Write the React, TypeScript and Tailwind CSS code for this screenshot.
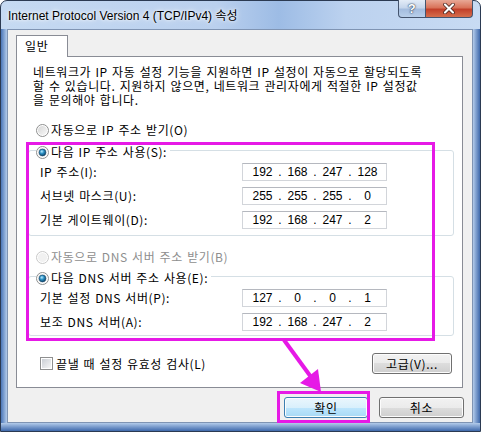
import React from 'react';

const kr = "font-['Noto_Sans_CJK_KR','Noto_Sans',sans-serif]";

function Radio({ checked, disabled }: { checked?: boolean; disabled?: boolean }) {
  return (
    <svg width="13" height="13" viewBox="0 0 13 13" className="shrink-0">
      <defs>
        <linearGradient id="rbg" x1="0" y1="0" x2="1" y2="1">
          <stop offset="0" stopColor="#d6d6d6" />
          <stop offset="1" stopColor="#f8f8f8" />
        </linearGradient>
        <radialGradient id="rdot" cx="0.4" cy="0.35" r="0.7">
          <stop offset="0" stopColor="#b9ecff" />
          <stop offset="0.45" stopColor="#2a8fc4" />
          <stop offset="1" stopColor="#0b3a5c" />
        </radialGradient>
      </defs>
      <circle cx="6.5" cy="6.5" r="6" fill="#fff" stroke={disabled ? '#c8c8c8' : '#8e8f8f'} />
      <circle cx="6.5" cy="6.5" r="4.6" fill={disabled ? '#f1f1f1' : 'url(#rbg)'} />
      {checked && <circle cx="6.5" cy="6.5" r="3.4" fill="url(#rdot)" stroke="#164a6e" strokeWidth="0.6" />}
    </svg>
  );
}

function Checkbox() {
  return (
    <div className="w-[13px] h-[13px] shrink-0 border border-[#8e8f8f] bg-white p-[1px]">
      <div className="w-full h-full bg-gradient-to-br from-[#cbcfd5] to-[#f6f6f6]" />
    </div>
  );
}

function IpField({ parts }: { parts: string[] }) {
  return (
    <div className="w-[145px] h-[18px] flex items-center pl-[5px] bg-white border border-[#d2d5da] border-t-[#b5b8bf] font-['Liberation_Sans',sans-serif] text-[12px] text-black leading-none tracking-normal">
      {parts.map((p, i) => (
        <React.Fragment key={i}>
          {i > 0 && <span className="w-[6px] text-center">.</span>}
          <span className="w-[29px] text-center">{p}</span>
        </React.Fragment>
      ))}
    </div>
  );
}

function FieldRow({ label, parts }: { label: string; parts: string[] }) {
  return (
    <div className="h-[24px] flex items-center pl-[11px]">
      <span className="w-[202px]">{label}</span>
      <IpField parts={parts} />
    </div>
  );
}

function RadioRow({ label, checked, disabled, className = '' }: { label: string; checked?: boolean; disabled?: boolean; className?: string }) {
  return (
    <div className={`h-[16px] flex items-center gap-[2px] ${className}`}>
      <Radio checked={checked} disabled={disabled} />
      <span className={disabled ? 'text-[#8e8e8e]' : 'text-black'}>{label}</span>
    </div>
  );
}

const btn =
  'h-[21px] rounded-[3px] border flex items-center justify-center text-[12px] text-black shadow-[inset_0_0_0_1px_#fcfcfc]';
const btnGray =
  'border-[#707070] bg-[linear-gradient(to_bottom,#f2f2f2_0%,#ebebeb_50%,#dddddd_50%,#cfcfcf_100%)]';
const btnBlue =
  'border-[#3c7fb1] bg-[linear-gradient(to_bottom,#eaf6fd_0%,#d9f0fc_50%,#bee6fd_50%,#a7d9f5_100%)] shadow-[inset_0_0_0_1px_#c4e8fc]';

export default function App() {
  return (
    <div className={`w-[481px] h-[432px] relative overflow-hidden bg-white text-[12px] tracking-[0.6px] [word-spacing:1px] ${kr}`}>
      <div className="w-full h-full flex flex-col rounded-t-[7px] border border-[#2b3a52] bg-[linear-gradient(90deg,#c6daf2_0%,#bad0ee_45%,#9dbce5_58%,#bcd2ef_72%,#c8dbf3_100%)]">
        {/* title bar */}
        <div className="h-[28px] flex justify-between shrink-0">
          <div className="h-full flex items-center pl-[7px] pt-[1px] font-['Liberation_Sans','Noto_Sans_CJK_KR',sans-serif] text-[12px] tracking-normal [word-spacing:0] text-black [text-shadow:0_0_6px_#fff,0_0_3px_#fff]">
            Internet Protocol Version 4 (TCP/IPv4) 속성
          </div>
          <div className="self-start flex -mt-[1px] pr-[7px]">
            <div className="w-[28px] h-[18px] rounded-bl-[4px] border border-[#44546e] border-t-0 bg-[linear-gradient(to_bottom,#e3ecf7_0%,#c6d6ec_45%,#a4bddf_55%,#b9cfea_100%)] flex items-center justify-center">
              <span className="font-['Liberation_Sans',sans-serif] font-bold text-[13px] text-white leading-none [text-shadow:0_0_2px_#233550,0_0_1px_#233550]">?</span>
            </div>
            <div className="w-[47px] h-[18px] rounded-br-[4px] border border-[#44546e] border-t-0 border-l-0 bg-[linear-gradient(to_bottom,#e8a896_0%,#d9735a_45%,#c2402a_55%,#d66e4c_100%)] flex items-center justify-center">
              <svg width="14" height="11" viewBox="0 0 14 11">
                <path d="M3 1.5 L11 9.5 M11 1.5 L3 9.5" stroke="#3a1a14" strokeWidth="3.6" strokeLinecap="round" />
                <path d="M3 1.5 L11 9.5 M11 1.5 L3 9.5" stroke="#fff" strokeWidth="2.2" strokeLinecap="round" />
              </svg>
            </div>
          </div>
        </div>

        {/* body */}
        <div className="flex-1 flex">
          <div className="w-[6px] bg-gradient-to-r from-[#4c77b8] to-[#b3cbea]" />
          <div className="w-[466px] h-[394px] border border-[#7f94b3] bg-[#f0f0f0] flex flex-col">
            <div className="pl-[8px] pr-[9px] pt-[5px]">
              <div className="w-[52px] h-[22px] -mb-[1px] relative z-10 border border-[#898c95] border-b-0 bg-white flex items-center pl-[8px] pb-[1px]">
                일반
              </div>
              <div className="h-[332px] border border-[#898c95] bg-white flex flex-col text-black">
                <div className="pl-[16px] pt-[8px] leading-[14px]">
                  <div>네트워크가 IP 자동 설정 기능을 지원하면 IP 설정이 자동으로 할당되도록</div>
                  <div>할 수 있습니다. 지원하지 않으면, 네트워크 관리자에게 적절한 IP 설정값</div>
                  <div>을 문의해야 합니다.</div>
                </div>

                <RadioRow label="자동으로 IP 주소 받기(O)" className="mt-[15px] pl-[19px]" />

                <div className="mt-[12px] ml-[11px] mr-[8px] border border-[#d5dfe5] rounded-[3px] pb-[3px] flex flex-col">
                  <RadioRow label="다음 IP 주소 사용(S):" checked className="-mt-[7px] ml-[7px] self-start bg-white pr-[3px]" />
                  <FieldRow label="IP 주소(I):" parts={['192', '168', '247', '128']} />
                  <FieldRow label="서브넷 마스크(U):" parts={['255', '255', '255', '0']} />
                  <FieldRow label="기본 게이트웨이(D):" parts={['192', '168', '247', '2']} />
                </div>

                <RadioRow label="자동으로 DNS 서버 주소 받기(B)" disabled className="mt-[13px] pl-[19px]" />

                <div className="mt-[11px] ml-[11px] mr-[8px] border border-[#d5dfe5] rounded-[3px] pb-[1px] flex flex-col">
                  <RadioRow label="다음 DNS 서버 주소 사용(E):" checked className="-mt-[7px] ml-[7px] self-start bg-white pr-[3px]" />
                  <FieldRow label="기본 설정 DNS 서버(P):" parts={['127', '0', '0', '1']} />
                  <FieldRow label="보조 DNS 서버(A):" parts={['192', '168', '247', '2']} />
                </div>

                <div className="mt-[17px] h-[21px] flex items-center justify-between pl-[23px] pr-[10px]">
                  <div className="flex items-center gap-[3px]">
                    <Checkbox />
                    <span>끝낼 때 설정 유효성 검사(L)</span>
                  </div>
                  <button className={`${btn} ${btnGray} w-[80px]`}>고급(V)...</button>
                </div>
              </div>
            </div>

            <div className="mt-[9px] pr-[8px] flex justify-end gap-[11px]">
              <button className={`${btn} ${btnBlue} w-[84px]`}>확인</button>
              <button className={`${btn} ${btnGray} w-[85px]`}>취소</button>
            </div>
          </div>
          <div className="w-[7px] bg-gradient-to-l from-[#3f69ab] to-[#b3cbea]" />
        </div>
        <div className="h-[8px] shrink-0 bg-gradient-to-t from-[#3f69ab] to-[#b3cbea]" />
      </div>

      {/* magenta annotations */}
      <svg className="absolute inset-0 pointer-events-none" width="481" height="432" viewBox="0 0 481 432">
        <rect x="27.5" y="143.5" width="406" height="196" fill="none" stroke="#e619e6" strokeWidth="3" />
        <rect x="278.5" y="392.5" width="90" height="29" fill="none" stroke="#e619e6" strokeWidth="3" />
        <line x1="284" y1="340" x2="311" y2="377" stroke="#e619e6" strokeWidth="4" />
        <polygon points="321,392 300,383 318,369" fill="#e619e6" />
      </svg>
    </div>
  );
}
